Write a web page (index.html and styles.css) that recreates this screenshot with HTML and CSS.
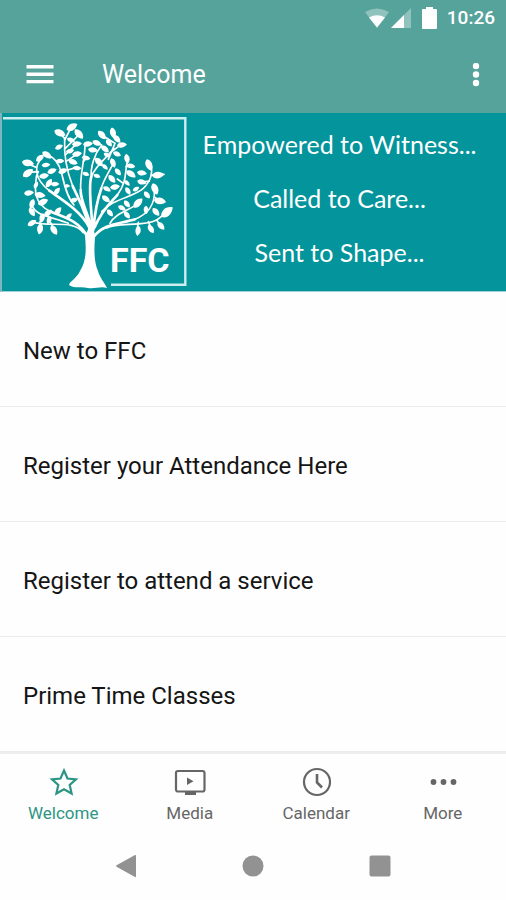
FILE: index.html
```html
<!DOCTYPE html>
<html lang="en">
<head>
<meta charset="utf-8">
<meta name="viewport" content="width=device-width, initial-scale=1">
<title>Welcome</title>
<link rel="stylesheet" href="styles.css">
</head>
<body>
<div class="app">
  <header class="top">
    <div class="status">
      <svg width="26" height="20" viewBox="0 0 26 20" aria-hidden="true"><path fill="#fff" opacity=".35" d="M1 4Q13-3 25 4L13 20z"/><path fill="#fff" d="M5 9.500Q13 5 21 9.500L13 19.500z"/></svg>
      <svg class="signal" width="20" height="20" viewBox="0 0 20 20" aria-hidden="true"><path fill="#fff" opacity=".35" d="M20 0v20H0z"/><path fill="#fff" d="M13 7v13H0z"/></svg>
      <svg class="battery" width="15" height="22" viewBox="0 0 15 22" aria-hidden="true"><path fill="#fff" d="M4 0h7v2h3q1 0 1 1v18q0 1-1 1H1q-1 0-1-1V3q0-1 1-1h3z"/></svg>
      <span class="clock">10:26</span>
    </div>
    <div class="bar">
      <button class="icon-btn" aria-label="Menu"><svg width="28" height="20" viewBox="0 0 28 20"><path stroke="#fff" stroke-width="3.400" d="M0.500 1.800h27M0.500 9.200h27M0.500 16.600h27"/></svg></button>
      <h1 class="title">Welcome</h1>
      <button class="icon-btn" aria-label="More options"><svg width="8" height="24" viewBox="0 0 8 24"><g fill="#fff"><circle cx="4" cy="3" r="3.200"/><circle cx="4" cy="11.500" r="3.200"/><circle cx="4" cy="20" r="3.200"/></g></svg></button>
    </div>
  </header>

  <section class="banner">
    <svg class="logo" width="190" height="178" viewBox="0 113 190 178" role="img" aria-label="FFC tree">
      <defs><path id="l" d="M-6.200 0C-4-3.800 2-5 6.200 0C2 4.400-4 4.400-6.200 0z"/></defs>
      <path fill="none" stroke="#cdeeee" stroke-width="2.400" d="M3 118.200H185.300V284.800H111"/>
      <path fill="#fff" d="M85 236C86 232 89 229 90 225H94C93 230 95 233 95 237C94 250 94 262 98 271C100 278 104 282 107 288C101 286 95 289 88 288C81 286 75 289 69 285C70 281 77 278 80 271C87 260 86 247 85 236z"/>
      <g transform="translate(0 110) scale(.33333)" fill="none" stroke="#fff" stroke-linecap="round">
        <g stroke-width="8">
          <path d="M272 372C262 310 232 260 218 228M276 360C264 310 240 270 242 240M277 350C274 290 264 230 274 200M280 360C286 290 295 260 304 235M284 352C305 300 335 275 352 255"/>
          <path d="M268 352C240 300 180 265 148 242M262 380C235 330 190 322 150 304M280 382C310 340 360 342 405 328"/>
        </g>
        <g stroke-width="5">
          <path d="M218 228C193 165 192 120 194 85M242 240C240 185 255 150 255 105M274 200C290 160 325 140 342 115M274 205C270 170 285 130 305 105M304 235C310 210 325 190 340 160"/>
          <path d="M352 255C382 215 374 185 382 155M305 305C340 265 400 262 430 235C455 210 456 190 455 170M400 330C445 312 466 285 463 240M320 354C350 335 430 352 470 330C485 320 492 312 500 305M330 340C345 310 390 300 415 280"/>
          <path d="M148 242C100 205 102 165 128 142M222 285C200 260 192 220 185 190C178 160 160 140 142 135M150 304C100 280 105 235 108 212C108 200 112 190 115 185M250 368C218 326 150 354 95 335M205 340C160 320 105 320 96 285"/>
          <path d="M194 90L212 55M194 85L180 70M196 115L236 75M196 135L230 101M197 155L230 133M203 180L230 172M250 155L258 145M325 148L345 100L310 78M335 125L360 106M112 185L84 188M108 172L84 162M378 170L398 168M455 195L492 193M448 213L425 216M370 220L352 207M465 262L480 273M415 337L412 355M445 335L454 355M470 330L480 345M120 335L120 354M152 338L162 356"/>
        </g>
      </g>
      <g fill="#fff">
        <use href="#l" transform="translate(72 127) rotate(-30)"/><use href="#l" transform="translate(60 133) rotate(25)"/><use href="#l" transform="translate(79 134) rotate(50)"/><use href="#l" transform="translate(71 140) rotate(20) scale(.7)"/><use href="#l" transform="translate(77 144) rotate(-5) scale(.8)"/><use href="#l" transform="translate(59 147) rotate(-25) scale(.7)"/><use href="#l" transform="translate(70 151) rotate(-15) scale(.7)"/><use href="#l" transform="translate(77 154) rotate(-10) scale(.8)"/><use href="#l" transform="translate(88 144) rotate(-5) scale(.8)"/><use href="#l" transform="translate(97 143) rotate(25) scale(.8)"/><use href="#l" transform="translate(93 150) rotate(10) scale(.8)"/><use href="#l" transform="translate(86 158) rotate(10) scale(.7)"/>
        <use href="#l" transform="translate(47 155) rotate(35) scale(.9)"/><use href="#l" transform="translate(40 158) rotate(-40) scale(.8)"/><use href="#l" transform="translate(28 163) rotate(10)"/><use href="#l" transform="translate(28 173) rotate(-35)"/><use href="#l" transform="translate(46 165) rotate(-5) scale(.7)"/><use href="#l" transform="translate(60 161) scale(.7)"/><use href="#l" transform="translate(73 162) rotate(20) scale(.8)"/><use href="#l" transform="translate(77 168) rotate(5) scale(.7)"/><use href="#l" transform="translate(52 171) rotate(-20) scale(.8)"/><use href="#l" transform="translate(63 171) rotate(-20) scale(.8)"/><use href="#l" transform="translate(44 176) rotate(-10) scale(.8)"/><use href="#l" transform="translate(49 183) rotate(-55) scale(.8)"/><use href="#l" transform="translate(55 184) scale(.7)"/><use href="#l" transform="translate(57 191) rotate(-50) scale(.7)"/><use href="#l" transform="translate(29 193) rotate(-5) scale(.8)"/><use href="#l" transform="translate(40 195) rotate(10) scale(.9)"/><use href="#l" transform="translate(67 186) scale(.5)"/><use href="#l" transform="translate(43 202) rotate(-25) scale(.9)"/><use href="#l" transform="translate(74 200) rotate(-15) scale(.7)"/><use href="#l" transform="translate(86 174) rotate(20) scale(.6)"/><use href="#l" transform="translate(36 185) rotate(-60) scale(.6)"/>
        <use href="#l" transform="translate(102 135) rotate(50) scale(.9)"/><use href="#l" transform="translate(113 133) rotate(80) scale(.9)"/><use href="#l" transform="translate(117 139) rotate(50) scale(.8)"/><use href="#l" transform="translate(122 145) rotate(-5) scale(.8)"/><use href="#l" transform="translate(109 143) rotate(50) scale(.7)"/><use href="#l" transform="translate(105 149) rotate(40) scale(.8)"/><use href="#l" transform="translate(117 154) rotate(25) scale(.7)"/><use href="#l" transform="translate(107 155) rotate(30) scale(.6)"/><use href="#l" transform="translate(99 162) rotate(50) scale(.9)"/><use href="#l" transform="translate(113 163) rotate(70) scale(.8)"/><use href="#l" transform="translate(127 159) rotate(80) scale(.8)"/><use href="#l" transform="translate(131 166) rotate(10) scale(.7)"/><use href="#l" transform="translate(131 174) rotate(35) scale(.9)"/><use href="#l" transform="translate(118 172) rotate(50) scale(.7)"/><use href="#l" transform="translate(105 167) rotate(45) scale(.6)"/><use href="#l" transform="translate(97 176) rotate(20) scale(.6)"/><use href="#l" transform="translate(112 179) rotate(50) scale(.8)"/><use href="#l" transform="translate(107 189) rotate(30) scale(.7)"/><use href="#l" transform="translate(115 187) rotate(-10) scale(.8)"/><use href="#l" transform="translate(127 183) rotate(45) scale(.6)"/><use href="#l" transform="translate(106 199) rotate(40) scale(.8)"/>
        <use href="#l" transform="translate(149 165) rotate(70)"/><use href="#l" transform="translate(142 173) rotate(10) scale(.8)"/><use href="#l" transform="translate(158 175) rotate(-5)"/><use href="#l" transform="translate(142 182) rotate(15) scale(.8)"/><use href="#l" transform="translate(155 189) rotate(70)"/><use href="#l" transform="translate(128 191) rotate(60) scale(.7)"/><use href="#l" transform="translate(136 189) rotate(-30) scale(.6)"/><use href="#l" transform="translate(147 195) rotate(50) scale(.7)"/><use href="#l" transform="translate(160 201) rotate(10)"/><use href="#l" transform="translate(138 203) rotate(-45)"/><use href="#l" transform="translate(146 210) rotate(90) scale(.7)"/><use href="#l" transform="translate(167 212) rotate(-40) scale(1.200)"/><use href="#l" transform="translate(156 212) rotate(50) scale(.8)"/><use href="#l" transform="translate(127 204) rotate(50) scale(.7)"/><use href="#l" transform="translate(122 208) rotate(30) scale(.7)"/><use href="#l" transform="translate(127 215) rotate(50) scale(.7)"/><use href="#l" transform="translate(110 213) rotate(50) scale(.7)"/><use href="#l" transform="translate(138 231) rotate(100) scale(.8)"/><use href="#l" transform="translate(151 229) rotate(60) scale(.8)"/><use href="#l" transform="translate(161 226) rotate(50) scale(.8)"/>
        <use href="#l" transform="translate(32 223) rotate(-30) scale(.8)"/><use href="#l" transform="translate(40 229) rotate(100) scale(.9)"/><use href="#l" transform="translate(54 230) rotate(60) scale(.9)"/><use href="#l" transform="translate(42 218) rotate(105) scale(.8)"/><use href="#l" transform="translate(49 220) rotate(110) scale(.7)"/><use href="#l" transform="translate(32 212) rotate(60) scale(.8)"/><use href="#l" transform="translate(32 204) rotate(110) scale(.8)"/><use href="#l" transform="translate(48 213) rotate(-40) scale(.8)"/><use href="#l" transform="translate(58 211) rotate(-50) scale(.8)"/><use href="#l" transform="translate(69 216) rotate(-40) scale(.6)"/>
      </g>
      <text class="logo-text" x="110" y="272">FFC</text>
    </svg>
    <div class="motto"><p>Empowered to Witness...</p><p>Called to Care...</p><p>Sent to Shape...</p></div>
  </section>

  <main class="list">
    <a class="row" href="#new">New to FFC</a>
    <a class="row" href="#attendance">Register your Attendance Here</a>
    <a class="row" href="#service">Register to attend a service</a>
    <a class="row" href="#classes">Prime Time Classes</a>
  </main>

  <nav class="tabs">
    <a class="tab active" href="#welcome"><svg width="32" height="30" viewBox="0 0 32 30"><path fill="none" stroke="currentColor" stroke-width="2.200" d="M17 3.500L20.500 11.500L29 12.300L22.700 18L24.600 26.500L17 22.200L9.400 26.500L11.300 18L5 12.300L13.500 11.500z"/></svg><span>Welcome</span></a>
    <a class="tab" href="#media"><svg width="32" height="30" viewBox="0 0 32 30"><rect x="2" y="4" width="28.500" height="20.500" rx="2" fill="none" stroke="currentColor" stroke-width="2.200"/><path fill="currentColor" d="M11 25h11v3H11zM13 10.500l6.500 3.800L13 18z"/></svg><span>Media</span></a>
    <a class="tab" href="#calendar"><svg width="32" height="30" viewBox="0 0 32 30"><circle cx="17" cy="15" r="13" fill="none" stroke="currentColor" stroke-width="2.200"/><path fill="none" stroke="currentColor" stroke-width="2.600" d="M17 7v8.500l5 5"/></svg><span>Calendar</span></a>
    <a class="tab" href="#more"><svg width="32" height="30" viewBox="0 0 32 30"><g fill="currentColor"><circle cx="6.500" cy="15" r="2.900"/><circle cx="16.500" cy="15" r="2.900"/><circle cx="26.500" cy="15" r="2.900"/></g></svg><span>More</span></a>
  </nav>

  <div class="system">
    <button class="icon-btn" aria-label="Back"><svg width="22" height="24" viewBox="0 0 22 24"><path fill="#929292" d="M20 1q1-.5 1 1v20q0 1.500-1 1L2 13q-2-1 0-2z"/></svg></button>
    <button class="icon-btn" aria-label="Home"><svg width="22" height="22" viewBox="0 0 22 22"><circle cx="11" cy="11" r="10.500" fill="#929292"/></svg></button>
    <button class="icon-btn" aria-label="Recent apps"><svg width="22" height="22" viewBox="0 0 22 22"><rect x=".5" y=".5" width="21" height="21" rx="2" fill="#929292"/></svg></button>
  </div>
</div>
</body>
</html>
```
FILE: styles.css
```css
* { box-sizing: border-box; }

body {
  margin: 0;
  background: #fefefe;
  color: #151515;
  font-family: Roboto, "Liberation Sans", sans-serif;
}

h1, p { margin: 0; }

a { color: inherit; text-decoration: none; }

svg { display: block; }

.app {
  display: flex;
  flex-direction: column;
  min-height: 100vh;
}

.icon-btn {
  display: flex;
  padding: 0;
  border: 0;
  background: none;
}

.top {
  background: #56a39c;
  color: #fff;
}

.status {
  display: flex;
  align-items: center;
  justify-content: flex-end;
  height: 36px;
  padding: 0 11px 0 0;
}

.signal { margin-left: 1px; }

.battery { margin-left: 11px; }

.clock {
  margin-left: 10px;
  font-size: 19px;
  font-weight: 500;
  line-height: 36px;
}

.bar {
  display: flex;
  align-items: center;
  height: 77px;
  padding: 0 26px;
}

.title {
  flex: 1;
  margin-left: 48px;
  font-size: 25px;
  font-weight: 400;
}

.banner {
  display: flex;
  align-items: center;
  background: #04949b;
  border-left: 2px solid #7eb6bd;
  border-bottom: 1px solid #9fd2d6;
  color: #fff;
}

.logo {
  flex: none;
  margin-left: -2px;
}

.logo-text {
  fill: #fff;
  font-family: Roboto, sans-serif;
  font-size: 34px;
  font-weight: 700;
}

.motto {
  flex: 1;
  padding: 0 17px 8px 0;
  font-family: Lato, sans-serif;
  font-size: 25px;
  line-height: 54px;
  text-align: center;
}

.row {
  display: flex;
  align-items: center;
  height: 115px;
  padding: 4px 23px 0;
  border-bottom: 1px solid #ebebeb;
  font-size: 24px;
}

.tabs {
  display: grid;
  grid-template-columns: repeat(4, 1fr);
  border-top: 2px solid #eeeeee;
  color: #666;
}

.tab {
  display: flex;
  flex-direction: column;
  align-items: center;
  gap: 6px;
  padding: 13px 0 10px;
  font-size: 17px;
  line-height: 20px;
}

.tab.active { color: #2d9583; }

.system {
  display: grid;
  grid-template-columns: repeat(3, 1fr);
  flex: 1;
  align-items: center;
  justify-items: center;
  padding: 0 63px 2px;
}
```
